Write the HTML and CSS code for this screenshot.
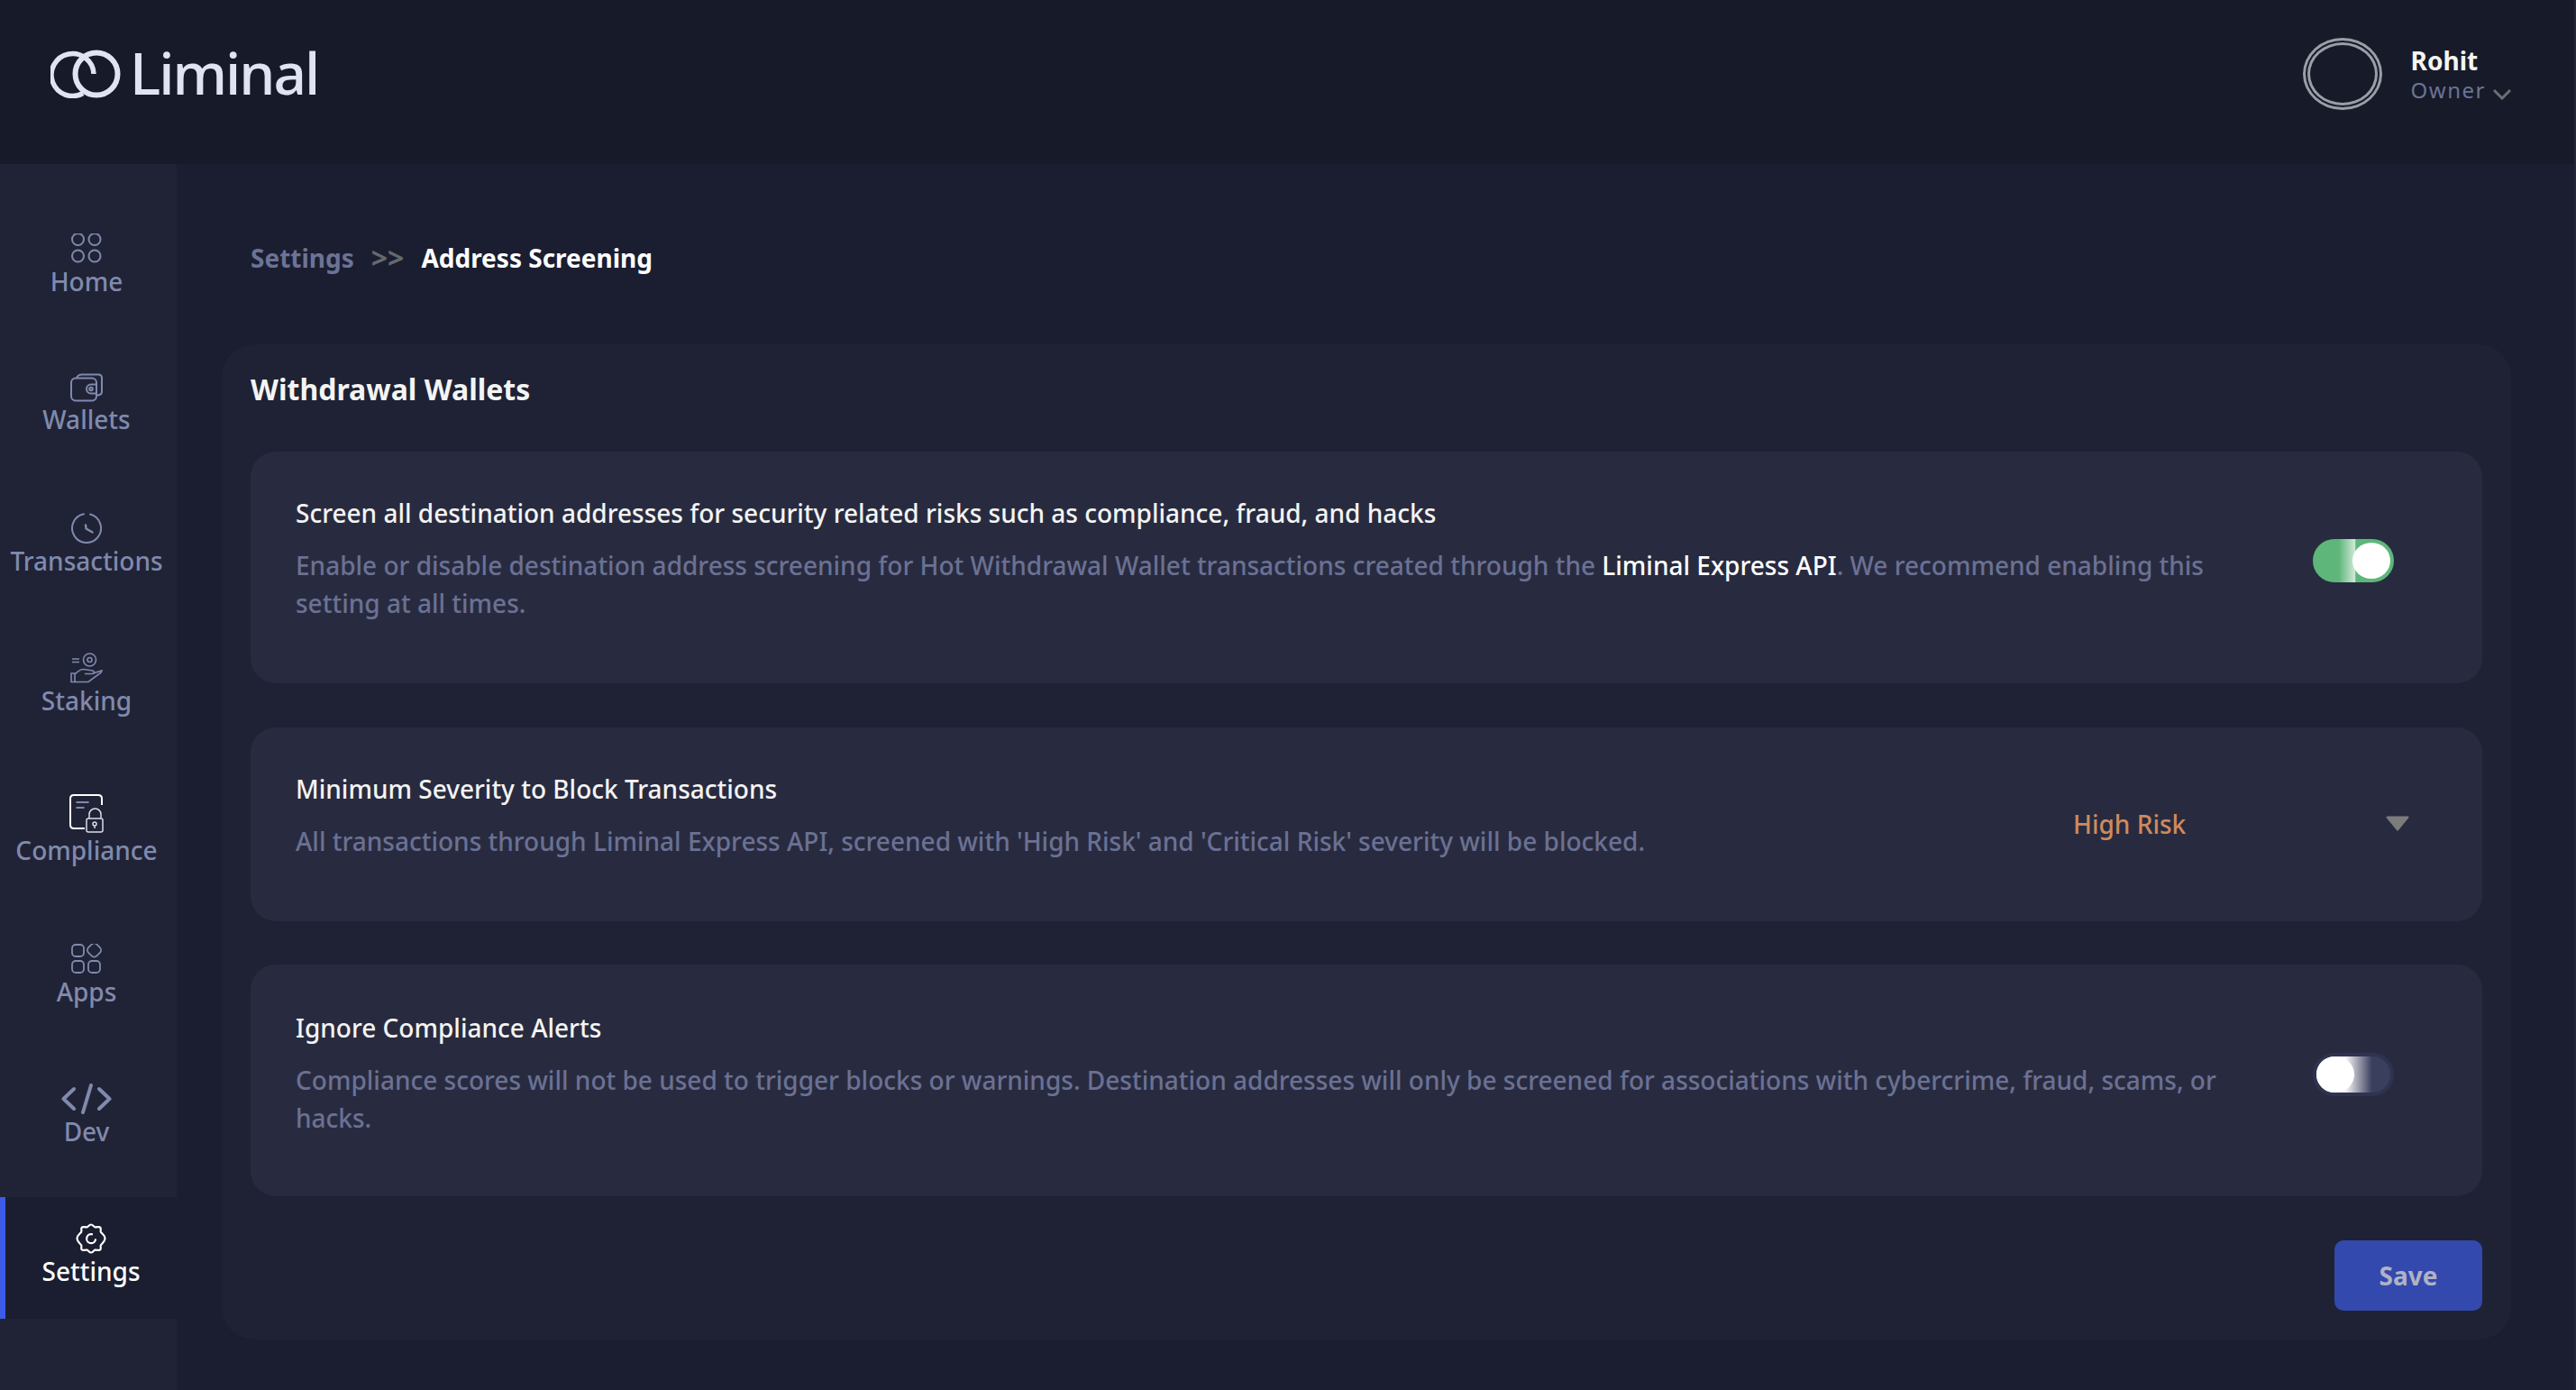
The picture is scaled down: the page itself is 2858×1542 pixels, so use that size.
FILE: index.html
```html
<!DOCTYPE html>
<html lang="en">
<head>
    <meta charset="UTF-8">
    <title>Liminal - Address Screening</title>
    <link rel="stylesheet" href="styles.css">
</head>
<body>
    <header class="topbar">
        <div class="logo">
            <svg class="logo-mark" width="78" height="54" viewBox="0 0 78 54" fill="none" stroke="#e0e3f2" stroke-width="6">
                <circle cx="51" cy="27" r="23.500"/>
                <path d="M36 48.500A23.500 23.500 0 1 1 48 27" stroke-width="5.500"/>
            </svg>
            <span class="logo-text">Liminal</span>
        </div>
        <div class="user">
            <div class="avatar"></div>
            <div class="user-info">
                <div class="user-name">Rohit</div>
                <div class="user-role">Owner
                    <svg width="20" height="13" viewBox="0 0 20 13" fill="none" stroke="#6d6e74" stroke-width="3"><path d="M1 2l9 9 9-9"/></svg>
                </div>
            </div>
        </div>
    </header>

    <div class="layout">
        <nav class="sidebar">
            <a class="nav-item">
                <span class="nav-icon">
                    <svg width="34" height="34" viewBox="0 1 34 34" fill="none" stroke="#808aad" stroke-width="2">
                        <circle cx="7.500" cy="7.500" r="6.500"/>
                        <circle cx="26" cy="7.500" r="6.500"/>
                        <circle cx="7.500" cy="26" r="6.500"/>
                        <circle cx="26" cy="26" r="6.500"/>
                    </svg>
                </span>
                <span class="nav-label">Home</span>
            </a>
            <a class="nav-item">
                <span class="nav-icon">
                    <svg width="36" height="32" viewBox="0 0 36 32" fill="none" stroke="#808aad" stroke-width="2">
                        <rect x="1" y="5.500" width="28" height="25" rx="5"/>
                        <path d="M7 5.500C8 2.500 10 1.500 13 1.500h18c2.500 0 4 1.500 4 4v15c0 2.500-1.500 4-6 4"/>
                        <path d="M29 12.500h-6a5 5 0 0 0 0 10h6"/>
                        <circle cx="23" cy="17.500" r="1.800"/>
                    </svg>
                </span>
                <span class="nav-label">Wallets</span>
            </a>
            <a class="nav-item">
                <span class="nav-icon">
                    <svg width="34" height="34" viewBox="0 0 34 34" fill="none" stroke="#808aad" stroke-width="2" stroke-linecap="round">
                        <path d="M14 1.300A16 16 0 1 0 21 1.500"/>
                        <path d="M16 13.500l.6 4 7 4" stroke-width="2.400"/>
                    </svg>
                </span>
                <span class="nav-label">Transactions</span>
            </a>
            <a class="nav-item">
                <span class="nav-icon">
                    <svg width="36" height="34" viewBox="0 0 36 34" fill="none" stroke="#808aad" stroke-width="1.600">
                        <circle cx="21.500" cy="8" r="7"/>
                        <circle cx="21.500" cy="8" r="2.500"/>
                        <path d="M2 7h8M2 10.500h8"/>
                        <path d="M1 23h4v9.500H1z"/>
                        <path d="M5 24c3-3 6-6 10-5.500l10 1.500c2 .5 2 3.500-.5 3.500H16"/>
                        <path d="M25 23l10-3c-.5 2-1.500 3-3 3.500L20 32.500H5"/>
                    </svg>
                </span>
                <span class="nav-label">Staking</span>
            </a>
            <a class="nav-item nav-tall">
                <span class="nav-icon">
                    <svg width="38" height="44" viewBox="0 0 38 44" fill="none" stroke="#d8dbe8" stroke-width="1.500">
                        <path d="M17 39H5c-2.500 0-4-1.500-4-4V6c0-2.500 1.500-4 4-4h27c2.500 0 4 1 4 4v7" stroke="#ffffff" stroke-width="2"/>
                        <path d="M7.500 10h14M7.500 16h9" stroke="#808aad" stroke-width="2"/>
                        <rect x="19" y="28" width="18" height="15" rx="2"/>
                        <path d="M22 28v-4.500a6.500 6.500 0 0 1 13 0V28"/>
                        <circle cx="28" cy="34" r="2"/>
                        <path d="M28 36v3"/>
                    </svg>
                </span>
                <span class="nav-label">Compliance</span>
            </a>
            <a class="nav-item">
                <span class="nav-icon">
                    <svg width="34" height="34" viewBox="0 1 34 34" fill="none" stroke="#808aad" stroke-width="1.800">
                        <rect x="1" y="2" width="13" height="13" rx="4"/>
                        <rect x="19" y="1.500" width="13" height="13" rx="4" transform="rotate(45 25.500 8)"/>
                        <rect x="1" y="20" width="13" height="13" rx="4"/>
                        <rect x="19" y="20" width="13" height="13" rx="4"/>
                    </svg>
                </span>
                <span class="nav-label">Apps</span>
            </a>
            <a class="nav-item">
                <span class="nav-icon">
                    <svg width="56" height="34" viewBox="0 0 56 34" fill="none" stroke="#808aad" stroke-width="4" stroke-linecap="round" stroke-linejoin="round">
                        <path d="M14 6L2.500 17 14 28"/>
                        <path d="M33 2l-9 30"/>
                        <path d="M42 6l11.500 11L42 28"/>
                    </svg>
                </span>
                <span class="nav-label">Dev</span>
            </a>
            <a class="nav-item active">
                <span class="nav-icon">
                    <svg width="34" height="34" viewBox="0 0 34 34" fill="none" stroke="#ffffff" stroke-width="2.200" stroke-linecap="round" stroke-linejoin="round">
                        <path d="M17 1.500c2 0 3 2.500 4.500 2.800 2 .4 4.200-1 5.700.3 1.300 1.300 0 3.500.6 5 .5 1.500 4.700 3.400 4.700 7.400s-4.200 5.900-4.700 7.400c-.6 1.500.7 3.700-.6 5-1.500 1.300-3.700-.1-5.700.3-1.500.3-2.500 2.800-4.500 2.800s-3-2.500-4.500-2.800c-2-.4-4.200 1-5.700-.3-1.300-1.300 0-3.500-.6-5C5.700 22.900 1.500 21 1.500 17s4.200-5.900 4.700-7.400c.6-1.500-.7-3.700.6-5 1.500-1.300 3.700.1 5.700-.3C14 4 15 1.500 17 1.500z"/>
                        <path d="M18 12.200a5 5 0 1 0 4 6"/>
                    </svg>
                </span>
                <span class="nav-label">Settings</span>
            </a>
        </nav>

        <main class="content">
            <div class="breadcrumb">
                <span class="crumb">Settings</span>
                <span class="crumb-sep">&gt;&gt;</span>
                <span class="crumb-current">Address Screening</span>
            </div>

            <section class="panel">
                <h2 class="panel-title">Withdrawal Wallets</h2>

                <div class="row">
                    <div class="row-text">
                        <div class="row-title">Screen all destination addresses for security related risks such as compliance, fraud, and hacks</div>
                        <p class="row-desc">Enable or disable destination address screening for Hot Withdrawal Wallet transactions created through the <span class="hl">Liminal Express API</span>. We recommend enabling this setting at all times.</p>
                    </div>
                    <div class="toggle on"><span class="knob"></span></div>
                </div>

                <div class="row">
                    <div class="row-text">
                        <div class="row-title">Minimum Severity to Block Transactions</div>
                        <p class="row-desc">All transactions through Liminal Express API, screened with 'High Risk' and 'Critical Risk' severity will be blocked.</p>
                    </div>
                    <div class="select">
                        <span class="select-value">High Risk</span>
                        <svg width="26" height="17" viewBox="0 0 26 17" fill="#7c7c7c" stroke="#7c7c7c" stroke-width="2" stroke-linejoin="round"><path d="M1.500 1.500h23L13 15.500z"/></svg>
                    </div>
                </div>

                <div class="row row-last">
                    <div class="row-text">
                        <div class="row-title">Ignore Compliance Alerts</div>
                        <p class="row-desc">Compliance scores will not be used to trigger blocks or warnings. Destination addresses will only be screened for associations with cybercrime, fraud, scams, or hacks.</p>
                    </div>
                    <div class="toggle off"><span class="knob"></span></div>
                </div>

                <div class="actions">
                    <button class="btn-save">Save</button>
                </div>
            </section>
        </main>
    </div>
</body>
</html>
```

FILE: styles.css
```css
* {
    box-sizing: border-box;
}

body {
    margin: 0;
    height: 1542px;
    overflow: hidden;
    background-color: #1b1e30;
    border-right: 2px solid #24263a;
    font-family: "Noto Sans", "Liberation Sans", sans-serif;
    font-size: 28px;
}

/* top bar */
.topbar {
    display: flex;
    justify-content: space-between;
    align-items: center;
    height: 182px;
    padding: 0 70px 18px 56px;
    background-color: #171a28;
}

.logo {
    display: flex;
    align-items: center;
    gap: 10px;
}

.logo-text {
    margin-top: -3px;
    font-size: 64px;
    font-weight: 500;
    line-height: 54px;
    letter-spacing: -2px;
    color: #e0e3f2;
}

.user {
    display: flex;
    align-items: center;
    gap: 32px;
}

.avatar {
    width: 88px;
    height: 80px;
    border: 8px double #9b9da8;
    border-radius: 50%;
}

.user-name {
    font-weight: 700;
    line-height: 36px;
    color: #f4f4f2;
}

.user-role {
    display: flex;
    align-items: center;
    gap: 8px;
    font-size: 24px;
    line-height: 30px;
    letter-spacing: 1.500px;
    color: #6b7396;
}

.user-role svg {
    margin-top: 8px;
}

/* sidebar */
.layout {
    display: flex;
    height: 1360px;
}

.sidebar {
    display: flex;
    flex-direction: column;
    gap: 20px;
    flex: none;
    width: 196px;
    padding-top: 48px;
    background-color: #202336;
}

.nav-item {
    display: flex;
    flex-direction: column;
    align-items: center;
    height: 135px;
    padding: 29px 4px 0 0;
    color: #808aad;
    font-weight: 500;
}

.nav-tall {
    height: 148px;
    padding-top: 30px;
}

.nav-icon {
    display: flex;
    align-items: center;
    justify-content: center;
    margin-bottom: 1px;
}

.nav-icon svg {
    display: block;
}

.nav-label {
    line-height: 36px;
}

.nav-item.active {
    padding-right: 0;
    border-left: 6px solid #3b5be8;
    background-color: #1b1e30;
    color: #ffffff;
}

/* main area */
.content {
    flex: 1;
    min-width: 0;
    padding: 0 70px 0 50px;
}

.breadcrumb {
    display: flex;
    align-items: center;
    gap: 19px;
    height: 200px;
    padding: 8px 0 0 32px;
    font-size: 28px;
    font-weight: 700;
}

.crumb {
    color: #6b7396;
}

.crumb-sep {
    font-size: 32px;
    line-height: 36px;
    color: #66686e;
}

.crumb-current {
    color: #ffffff;
}

.panel {
    height: 1104px;
    padding: 28px 32px 32px;
    border-radius: 36px;
    background-color: #1f2235;
}

.panel-title {
    margin: 0 0 48px;
    font-size: 32px;
    font-weight: 700;
    line-height: 43px;
    color: #f4f4f2;
}

.row {
    display: flex;
    justify-content: space-between;
    align-items: flex-start;
    margin-bottom: 48.500px;
    padding: 50px 98px 68px 50px;
    border-radius: 28px;
    background-color: #282b40;
}

.row-last {
    padding-top: 52px;
    padding-bottom: 66px;
}

.row-text {
    flex: 1;
    min-width: 0;
    max-width: 2132px;
}

.row-title {
    font-weight: 500;
    line-height: 36px;
    color: #f4f4f2;
}

.row-desc {
    margin: 19px 0 0;
    font-weight: 500;
    line-height: 42px;
    color: #6b7193;
}

.hl {
    color: #ffffff;
}

/* toggle */
.toggle {
    display: flex;
    flex: none;
    width: 90px;
    height: 48px;
    margin-top: 47px;
    padding: 4px;
    border-radius: 24px;
}

.row-last .toggle {
    margin-top: 46px;
}

.toggle.on {
    justify-content: flex-end;
    background: linear-gradient(90deg, #5eb67a 32%, #cfe9d7 52%, #5eb67a 53%);
}

.toggle.off {
    padding: 0;
    border: 4px solid #2e3350;
    background: linear-gradient(90deg, #f4f4f6 40%, #3b3f5e 75%);
}

.knob {
    display: block;
    width: 42px;
    height: 40px;
    border-radius: 50%;
    background-color: #ffffff;
}

/* select */
.select {
    display: flex;
    justify-content: space-between;
    align-items: center;
    flex: none;
    width: 373px;
    height: 36px;
    margin: 39px -17px 0 0;
    color: #cf8a5c;
    font-weight: 500;
}

/* save */
.actions {
    display: flex;
    justify-content: flex-end;
}

.btn-save {
    width: 164px;
    height: 78px;
    border: 0;
    border-radius: 10px;
    background-color: #3349ad;
    color: #b0b2c4;
    font-family: inherit;
    font-size: 28px;
    font-weight: 700;
}
```
